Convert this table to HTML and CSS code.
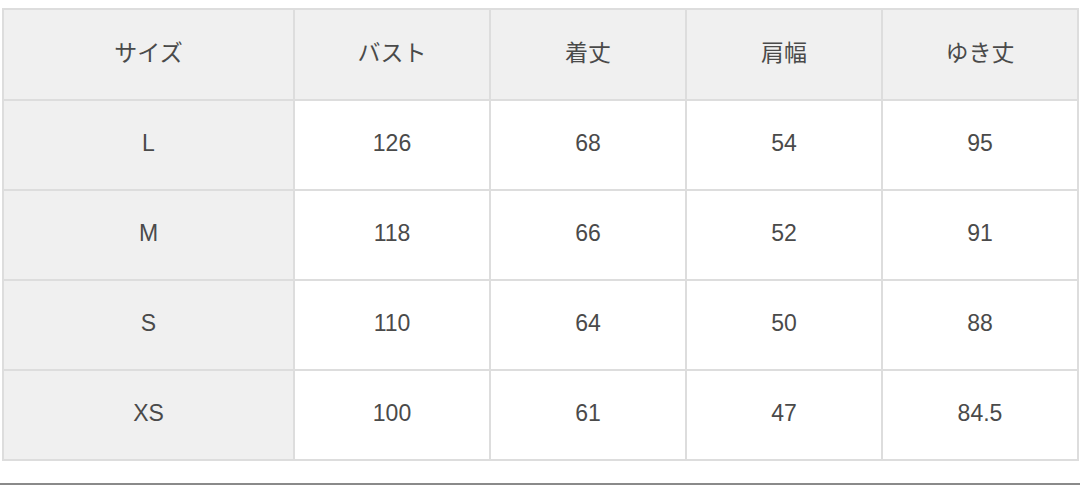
FILE: index.html
```html
<!DOCTYPE html>
<html lang="ja">
<head>
<meta charset="utf-8">
<link rel="stylesheet" href="styles.css">
</head>
<body>
<div class="page">
  <table class="size-table">
    <colgroup>
      <col class="c-first">
      <col class="c">
      <col class="c">
      <col class="c">
      <col class="c">
    </colgroup>
    <thead>
      <tr><th>サイズ</th><th>バスト</th><th>着丈</th><th>肩幅</th><th>ゆき丈</th></tr>
    </thead>
    <tbody>
      <tr><th>L</th><td>126</td><td>68</td><td>54</td><td>95</td></tr>
      <tr><th>M</th><td>118</td><td>66</td><td>52</td><td>91</td></tr>
      <tr><th>S</th><td>110</td><td>64</td><td>50</td><td>88</td></tr>
      <tr><th>XS</th><td>100</td><td>61</td><td>47</td><td>84.5</td></tr>
    </tbody>
  </table>
  <div class="rule"></div>
</div>
</body>
</html>
```
FILE: styles.css
```css
html, body {
  margin: 0;
  padding: 0;
  background: #ffffff;
}
.page {
  padding-top: 8px;
}
.size-table {
  margin-left: 2px;
  width: 1076px;
  border-collapse: collapse;
  table-layout: fixed;
  font-family: "Liberation Sans", "Noto Sans CJK JP", sans-serif;
  font-size: 23px;
  color: #4a4a4a;
}
.c-first { width: 291px; }
.c { width: 196px; }
.size-table th,
.size-table td {
  border: 2px solid #dddddd;
  height: 85px;
  padding: 0 0 3px 0;
  text-align: center;
  vertical-align: middle;
  font-weight: normal;
}
.size-table thead th {
  background: #f0f0f0;
  height: 81px;
  padding-bottom: 8px;
}
.size-table tbody th {
  background: #f0f0f0;
}
.size-table td {
  background: #ffffff;
}
.rule {
  margin-top: 22px;
  height: 2px;
  background: #8a8a8a;
}
```
